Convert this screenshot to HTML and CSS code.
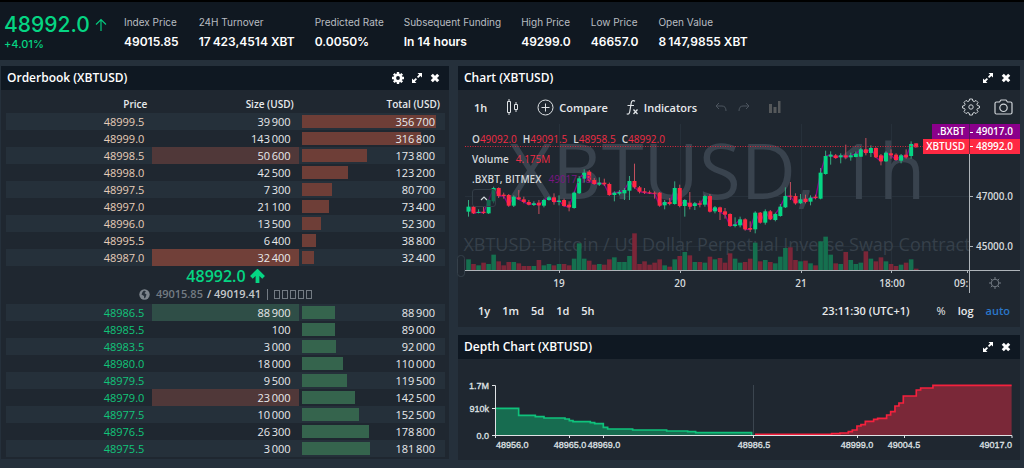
FILE: index.html
```html
<!DOCTYPE html>
<html lang="en">
<head>
<meta charset="utf-8">
<title>XBTUSD</title>
<link rel="stylesheet" href="styles.css">
</head>
<body>
<header class="ticker">
  <div class="last">
    <div class="last-price">48992.0
      <svg width="12" height="14" viewBox="0 0 12 14"><path d="M6 13V1.5M1 6.5 6 1.5l5 5" fill="none" stroke="#05c77c" stroke-width="1.2"/></svg>
    </div>
    <div class="last-change">+4.01%</div>
  </div>
  <dl class="stats">
    <div><dt>Index Price</dt><dd>49015.85</dd></div>
    <div><dt>24H Turnover</dt><dd>17&thinsp;423,4514 XBT</dd></div>
    <div><dt>Predicted Rate</dt><dd>0.0050%</dd></div>
    <div><dt>Subsequent Funding</dt><dd>In 14 hours</dd></div>
    <div><dt>High Price</dt><dd>49299.0</dd></div>
    <div><dt>Low Price</dt><dd>46657.0</dd></div>
    <div><dt>Open Value</dt><dd>8&thinsp;147,9855 XBT</dd></div>
  </dl>
</header>

<svg class="defs" width="0" height="0" aria-hidden="true">
  <symbol id="expand" viewBox="0 0 10 10"><path d="M5.5 0H10v4.500L8.400 2.900 6.200 5 5 3.800 7.100 1.600zM4.500 10H0V5.500l1.600 1.600L3.800 5 5 6.200 2.900 8.400z" fill="#fff"/></symbol>
  <symbol id="close" viewBox="0 0 10 10"><path d="M1.800 1.800 8.200 8.200M8.200 1.800 1.800 8.200" stroke="#fff" stroke-width="3"/></symbol>
</svg>

<main class="board">
  <section class="panel book">
    <div class="panel-head">
      <h2>Orderbook (XBTUSD)</h2>
      <button aria-label="Settings"><svg width="12" height="12" viewBox="0 0 12 12"><circle cx="6" cy="6" r="3.200" fill="none" stroke="#fff" stroke-width="2.600"/><path d="M6 0v2M6 10v2M0 6h2M10 6h2M1.800 1.800l1.400 1.400M8.800 8.800l1.400 1.400M10.200 1.800 8.800 3.200M3.200 8.800l-1.400 1.400" stroke="#fff" stroke-width="2.400"/></svg></button>
      <button aria-label="Expand"><svg width="10" height="10"><use href="#expand"/></svg></button>
      <button aria-label="Close"><svg width="10" height="10"><use href="#close"/></svg></button>
    </div>
    <div class="book-body">
      <table class="levels asks">
        <thead><tr><th>Price</th><th>Size (USD)</th><th>Total (USD)</th></tr></thead>
        <tbody id="asks"></tbody>
      </table>
      <div class="spread">
        <div class="spread-price">48992.0
          <svg width="15" height="14" viewBox="0 0 15 14"><path d="M7.500 14V2.500M1.400 8.400 7.500 2.300 13.600 8.400" fill="none" stroke="#05d583" stroke-width="3.800"/></svg>
        </div>
        <div class="spread-index">
          <svg width="11" height="11" viewBox="0 0 11 11"><circle cx="5.500" cy="5.500" r="5.200" fill="#7d848c"/><path d="M5 1.500 7 2.500 5.500 4 7.500 5.500 6.500 8.500 5.200 9.500 5 7 2.500 5.500 3.500 3z" fill="#29323c"/></svg>
          <span class="dim">49015.85</span><span class="mark">/ 49019.41</span><span class="bar-sep"></span><span class="boxes"><i></i><i></i><i></i><i></i><i></i></span>
        </div>
      </div>
      <table class="levels bids" aria-label="Bids">
        <tbody id="bids"></tbody>
      </table>
    </div>
  </section>

  <div class="side">
    <section class="panel">
      <div class="panel-head">
        <h2>Chart (XBTUSD)</h2>
        <button aria-label="Expand"><svg width="10" height="10"><use href="#expand"/></svg></button>
        <button aria-label="Close"><svg width="10" height="10"><use href="#close"/></svg></button>
      </div>
      <div class="tools">
        <button class="t-interval">1h</button>
        <button class="t-style" aria-label="Candles"><svg width="13" height="18" viewBox="0 0 13 18"><path d="M1.500 3.500h3v11h-3zM3 1v2.500M3 14.500V17M8.500 6.500h3v5h-3zM10 4v2.500M10 11.500V14" fill="none" stroke="#dfe3e6"/></svg></button>
        <button class="t-compare"><svg width="17" height="17" viewBox="0 0 17 17"><circle cx="8.500" cy="8.500" r="7.500" fill="none" stroke="#dfe3e6"/><path d="M8.500 4.500v8M4.500 8.500h8" stroke="#dfe3e6"/></svg>Compare</button>
        <button class="t-indicators"><svg width="13" height="17" viewBox="0 0 13 17"><path d="M9 2.200C7 .800 5.500 2 5.200 4L3.800 12.500C3.500 14.500 2.500 15.500.700 14.800M1.500 6.500H8" fill="none" stroke="#dfe3e6" stroke-width="1.200"/><path d="M7.500 10.500l4 4.500M11.500 10.500l-4 4.500" stroke="#dfe3e6" stroke-width="1.300"/></svg>Indicators</button>
        <button class="t-undo" aria-label="Undo"><svg width="12" height="10" viewBox="0 0 12 10"><path d="M4 1 1 4l3 3M1 4h6q4 0 4 5" fill="none" stroke="#4c555e"/></svg></button>
        <button class="t-redo" aria-label="Redo"><svg width="12" height="10" viewBox="0 0 12 10"><path d="M8 1l3 3-3 3M11 4H5Q1 4 1 9" fill="none" stroke="#4c555e"/></svg></button>
        <button class="t-bars" aria-label="Volume"><svg width="12" height="12" viewBox="0 0 12 12"><path d="M0 3h3v9H0zM4.500 6h3v6h-3zM9 0h2.500v12H9z" fill="#55585a"/></svg></button>
        <span class="fill"></span>
        <button class="t-gear" aria-label="Chart settings"><svg width="18" height="18" viewBox="0 0 18 18"><path d="M7.600 1h2.800l.500 2 1.300.550 1.800-1.100 2 2-1.100 1.750.550 1.300 2 .500v2l-2 .500-.550 1.300 1.100 1.800-2 2-1.800-1.100-1.300.550-.500 2H7.600l-.500-2-1.300-.550L4 15.600l-2-2 1.100-1.800L2.550 10.500l-2-.500V8l2-.500L3.100 6.200 2 4.400l2-2 1.800 1.150L7.100 3z" fill="none" stroke="#cfd4d8" stroke-linejoin="round"/><circle cx="9" cy="9" r="2.200" fill="none" stroke="#cfd4d8"/></svg></button>
        <button class="t-camera" aria-label="Snapshot"><svg width="19" height="16" viewBox="0 0 19 16"><path d="M2.500 3H5.500L7 1h5l1.500 2h3q1.500 0 1.500 1.500v9q0 1.500-1.500 1.500h-14Q1 15 1 13.500v-9Q1 3 2.500 3z" fill="none" stroke="#cfd4d8" stroke-width="1.200"/><circle cx="9.500" cy="8.800" r="3.700" fill="none" stroke="#cfd4d8" stroke-width="1.200"/></svg></button>
      </div>
      <div class="plot">
        <svg class="plot-svg" viewBox="0 0 562 169" role="img" aria-label="Hourly candles">
          <path d="M101.500 0V146M222.500 0V146M343.500 0V146M433.500 0V146M7 72.500H511M7 122.500H511" stroke="#26303a" fill="none"/>
          <text class="wm-big" x="259" y="75" text-anchor="middle">XBTUSD, 1h</text>
          <text class="wm-small" x="259" y="127" text-anchor="middle">XBTUSD: Bitcoin / US Dollar Perpetual Inverse Swap Contract</text>
          <path id="line" fill="none" stroke="#8b008b" stroke-width="1.300"/>
          <g id="candles"></g>
          <path d="M7 22.500H466" stroke="#d8263c" stroke-dasharray="1 1.500"/>
          <path d="M7 146.500H562M511.500 0V169M101.500 146v3M222.500 146v3M343.500 146v3M433.500 146v3M509.500 146v3M511 72.500h4M511 122.500h4" stroke="#aeb4b9" fill="none"/>
          <g class="axis">
            <text x="101" y="163" text-anchor="middle">19</text>
            <text x="222" y="163" text-anchor="middle">20</text>
            <text x="343" y="163" text-anchor="middle">21</text>
            <text x="434" y="163" text-anchor="middle">18:00</text>
            <text x="496" y="163">09:</text>
            <text x="555" y="76" text-anchor="end">47000.0</text>
            <text x="555" y="126" text-anchor="end">45000.0</text>
          </g>
          <path d="M474 0h88v15h-88z" fill="#8b008b"/>
          <path d="M465 15h97v15h-97z" fill="#ff2943"/>
          <path d="M511.500 0V30" stroke="#1f2730" stroke-opacity=".5"/>
          <path d="M512 8.500h3M512 22.500h3" stroke="#fff"/>
          <g class="axis tag">
            <text x="507" y="11" text-anchor="end">.BXBT</text><text x="555" y="11" text-anchor="end">49017.0</text>
            <text x="507" y="26" text-anchor="end">XBTUSD</text><text x="555" y="26" text-anchor="end">48992.0</text>
          </g>
          <g fill="none" stroke="#737b83"><circle cx="537" cy="159" r="3.800"/><path d="M537 153v2M537 163v2M531 159h2M541 159h2M532.800 154.800l1.400 1.400M539.800 161.800l1.400 1.400M541.200 154.800l-1.400 1.400M534.200 161.800l-1.400 1.400"/></g>
          <rect x="-.5" y="131.500" width="7" height="21" rx="3" fill="#1f2730" stroke="#35404a"/>
        </svg>
        <div class="legend">
          <div><b>O</b><span class="red">49092.0</span><b>H</b><span class="red">49091.5</span><b>L</b><span class="red">48958.5</span><b>C</b><span class="red">48992.0</span></div>
          <div><b>Volume</b><span class="red vol">4.175M</span></div>
          <div><b>.BXBT, BITMEX</b><span class="purple">49017.18</span></div>
          <button class="fold" aria-label="Collapse"><svg width="8" height="5" viewBox="0 0 8 5"><path d="M1 4 4 1l3 3" fill="none" stroke="#d5dade" stroke-width="1.200"/></svg></button>
        </div>
      </div>
      <div class="ranges">
        <button>1y</button><button>1m</button><button>5d</button><button>1d</button><button>5h</button>
        <span class="fill"></span>
        <button class="clock">23:11:30 (UTC+1)</button>
        <button class="pct">%</button><button class="log">log</button><button class="auto">auto</button>
      </div>
    </section>

    <section class="panel">
      <div class="panel-head">
        <h2>Depth Chart (XBTUSD)</h2>
        <button aria-label="Expand"><svg width="10" height="10"><use href="#expand"/></svg></button>
        <button aria-label="Close"><svg width="10" height="10"><use href="#close"/></svg></button>
      </div>
      <svg class="depth-svg" viewBox="0 0 562 101" role="img" aria-label="Market depth">
        <path d="M295.500 26V77" stroke="#3b454f"/>
        <g transform="translate(-3 -29) scale(.3333)">
          <path d="M122 235H191V256H241V260H267V264H330V267H343V272H354V275H406V278H419V281H445V292H458V297H533V300H635V303H698V305H722V308H890V317H122z" fill="#176c50"/>
          <path d="M122 235H191V256H241V260H267V264H330V267H343V272H354V275H406V278H419V281H445V292H458V297H533V300H635V303H698V305H722V308H890V317" fill="none" stroke="#0fc27b" stroke-width="5"/>
          <path d="M900 313H1130V311H1155V309H1180V305H1192V300H1206V288H1218V284H1231V274H1256V268H1268V265H1295V255H1307V245H1320V228H1332V219H1345V198H1384V180H1397V174H1434V166H1670V317H900z" fill="#7a2838"/>
          <path d="M900 313H1130V311H1155V309H1180V305H1192V300H1206V288H1218V284H1231V274H1256V268H1268V265H1295V255H1307V245H1320V228H1332V219H1345V198H1384V180H1397V174H1434V166H1670" fill="none" stroke="#f5213d" stroke-width="5"/>
        </g>
        <path d="M34 26.500h3.500V79M34 49.500h3.500M34 76.500H554V79M111.500 76v3M145.500 76v3M295.500 76v3M399.500 76v3M446.500 76v3" fill="none" stroke="#dfe2e5"/>
        <g class="depth-labels">
          <text x="31" y="30" text-anchor="end">1.7M</text><text x="31" y="53" text-anchor="end">910k</text><text x="31" y="80" text-anchor="end">0.0</text>
          <text x="38" y="89">48956.0</text><text x="112" y="89" text-anchor="middle">48965.0</text><text x="146" y="89" text-anchor="middle">48969.0</text><text x="296" y="89" text-anchor="middle">48986.5</text><text x="399" y="89" text-anchor="middle">48999.0</text><text x="446" y="89" text-anchor="middle">49004.5</text><text x="554" y="89" text-anchor="end">49017.0</text>
        </g>
      </svg>
    </section>
  </div>
</main>
<script src="app.js"></script>
</body>
</html>
```
FILE: styles.css
```css
* { box-sizing: border-box; }
body { margin: 0; background: #25303b; color: #e8eaec; font: 11px "Open Sans", "Noto Sans", sans-serif; }
button { background: none; border: 0; padding: 0; margin: 0; color: inherit; font: inherit; display: flex; align-items: center; cursor: pointer; }
svg { display: block; flex: none; }
h2, dl, dd { margin: 0; }
.defs { position: absolute; }
.fill { flex: 1; }

.ticker { display: flex; height: 60px; padding: 10px 4px 0; border-top: 2px solid #000; background: #101821; font-family: Inter, sans-serif; }
.last { width: 120px; color: #05d583; }
.last-price { display: flex; align-items: center; gap: 5px; font-size: 21px; line-height: 26px; font-weight: 500; }
.last-change { font-size: 11px; line-height: 12px; font-weight: 500; }
.stats { display: flex; gap: 20px; white-space: nowrap; }
.stats dt { font-size: 10px; line-height: 20px; color: #b9bdc1; }
.stats dd { font-size: 12px; line-height: 20px; font-weight: 600; color: #fff; }

.board { display: grid; grid-template-columns: 448fr 562fr; gap: 9px; padding: 6px 4px 8px 1px; align-items: start; }
.side { display: grid; gap: 8px; }
.panel { background: #1f2730; min-width: 0; }
.panel-head { display: flex; align-items: center; gap: 8px; height: 24px; padding: 0 9px 0 6px; background: #0f1822; }
.panel-head h2 { flex: 1; font-size: 12px; line-height: 24px; font-weight: 600; color: #fff; }

.book-body { padding: 6px 4px 2px 5px; }
.levels { width: 100%; table-layout: fixed; border-collapse: collapse; text-align: right; line-height: 17px; }
.levels th { padding: 0 5px 0 0; font-size: 10px; font-weight: 600; text-align: right; }
.levels td { height: 17px; padding: 0 8px 0 0; }
.levels tbody tr:nth-child(odd) { background: #25303a; }
.asks .price { color: #e6cdb9; }
.bids .price { color: #12c47a; }
.levels .total { padding: 0 9px 0 3px; }
.stack { display: grid; align-items: center; }
.stack > * { grid-area: 1 / 1; }
.stack i { height: 13px; background: #6e3e37; }
.bids .stack i { background: #35644d; }
.stack span { padding-right: 1px; }
.sell-soft { background: #503839; }
.sell-strong { background: #714039; }
.buy-soft { background: #2f4e47; }
.spread { height: 38px; }
.spread-price { display: flex; justify-content: center; align-items: center; gap: 4px; font-size: 16px; line-height: 20px; font-weight: 600; color: #05d583; }
.spread-index { display: flex; justify-content: center; align-items: center; gap: 6px; line-height: 16px; font-weight: 600; }
.dim { color: #737b83; }
.mark { color: #c5c9cc; margin-left: -2px; }
.bar-sep { width: 1px; height: 11px; background: #737b83; }
.boxes { display: flex; gap: 2px; }
.boxes i { width: 6px; height: 9px; border: 1px solid #737b83; }

.tools { display: flex; align-items: center; height: 34px; padding: 0 7px 0 16px; font-weight: 600; }
.tools button { gap: 5px; }
.t-style { margin-left: 19px; }
.t-compare { margin-left: 18px; }
.t-indicators { margin-left: 18px; }
.t-undo { margin-left: 18px; }
.t-redo { margin-left: 11px; }
.t-bars { margin-left: 19px; }
.t-camera { margin-left: 14px; }
.plot { position: relative; }
.plot-svg, .depth-svg { width: 100%; height: auto; overflow: visible; }
.wm-big { font-size: 76px; fill: #39434e; }
.wm-small { font-size: 18px; fill: #36404a; }
.axis { font-size: 10px; font-weight: 600; fill: #d5d9dc; }
.axis.tag { fill: #fff; }
.legend { position: absolute; left: 14px; top: 5px; font-size: 10px; line-height: 20px; }
.legend b { font-weight: 600; color: #d5d9dc; }
.red { color: #f02c44; margin-right: 6px; }
.vol { margin-left: 7px; }
.purple { color: #7b1583; margin-left: 7px; }
.fold { justify-content: center; width: 24px; height: 18px; border: 1px solid #333d47; border-radius: 3px; background: rgba(31, 39, 48, .6); }
.ranges { display: flex; align-items: center; gap: 12px; height: 34px; padding: 0 10px 0 20px; font-weight: 600; }
.clock { margin-right: 15px; }
.pct { font-weight: 400; }
.auto { color: #2a76c9; }
.depth-labels { font: 9px "Liberation Sans", sans-serif; fill: #dfe2e5; stroke: #dfe2e5; stroke-width: .3; }
```
FILE: app.js
```js
const MAX_TOTAL = 356700;
const asks = [
  ['48999.5', '39 900', '356 700'], ['48999.0', '143 000', '316 800'],
  ['48998.5', '50 600', '173 800', 'sell-soft'], ['48998.0', '42 500', '123 200'],
  ['48997.5', '7 300', '80 700'], ['48997.0', '21 100', '73 400'],
  ['48996.0', '13 500', '52 300'], ['48995.5', '6 400', '38 800'],
  ['48987.0', '32 400', '32 400', 'sell-strong']
];
const bids = [
  ['48986.5', '88 900', '88 900', 'buy-soft'], ['48985.5', '100', '89 000'],
  ['48983.5', '3 000', '92 000'], ['48980.0', '18 000', '110 000'],
  ['48979.5', '9 500', '119 500'], ['48979.0', '23 000', '142 500', 'sell-soft'],
  ['48977.5', '10 000', '152 500'], ['48976.5', '26 300', '178 800'],
  ['48975.5', '3 000', '181 800']
];
const rows = list => list.map(([price, size, total, flag = '']) => {
  const pct = Number(total.replace(' ', '')) / MAX_TOTAL * 100;
  // thin space as thousands separator
  const thin = s => s.replace(' ', '\u2009');
  return `<tr><td class="price">${price}</td><td class="${flag}">${thin(size)}</td>` +
    `<td class="total"><div class="stack"><i style="width:${pct.toFixed(1)}%"></i><span>${thin(total)}</span></div></td></tr>`;
}).join('');
document.getElementById('asks').innerHTML = rows(asks);
document.getElementById('bids').innerHTML = rows(bids);

// [direction, body top, body bottom, wick top, wick bottom, volume], in thirds of a plot unit
const data = [
['g',80,95,60,110,32],['r',80,100,78,102,18],['g',96,99,88,100,14],['r',95,99,80,102,22],['g',60,100,58,102,18],
['g',24,64,20,70,46],['r',24,48,22,54,26],['r',44,48,38,56,14],['r',45,77,42,80,24],['g',50,77,46,81,24],
['r',52,58,30,60,20],['r',58,66,50,70,12],['r',66,74,60,76,12],['g',70,75,64,78,12],['r',68,76,60,102,30],
['g',60,77,56,82,14],['g',52,60,48,62,18],['r',52,66,40,74,14],['g',62,66,46,76,18],['r',60,78,56,80,18],
['r',74,82,64,94,14],['g',38,84,35,86,34],['g',-5,40,-12,42,80],['g',-22,-4,-32,8,34],['r',-25,2,-30,8,28],
['r',0,12,-6,14,16],['g',8,14,-8,18,18],['r',8,13,-4,18,16],['r',12,45,8,47,32],['g',38,45,34,64,38],
['g',36,41,30,46,24],['g',30,40,24,60,24],['g',3,32,-12,60,42],['r',3,22,-49,26,110],['r',22,35,18,40,18],
['r',34,38,24,42,26],['r',37,40,32,42,16],['r',38,41,34,56,22],['r',38,77,36,80,32],['g',66,76,60,88,14],
['r',66,72,54,76,10],['g',24,72,4,74,32],['r',24,78,14,82,42],['g',60,78,58,110,54],['r',68,80,36,88,44],
['g',70,78,66,90,24],['r',70,74,62,82,24],['g',48,74,44,80,22],['r',48,95,42,97,40],['g',82,94,78,100,32],
['r',82,96,80,120,36],['r',94,104,84,116,22],['r',102,138,100,140,50],['g',133,138,112,142,34],['g',118,136,110,142,22],
['r',118,148,115,152,24],['r',144,149,124,156,34],['g',98,148,94,160,82],['r',98,128,96,130,26],['g',94,128,88,134,30],
['r',94,118,90,120,24],['g',102,120,98,124,20],['g',80,108,72,110,40],['g',48,82,22,84,66],['r',47,50,6,60,68],
['r',48,70,40,74,30],['g',58,70,42,72,26],['r',56,66,44,70,28],['g',53,65,46,76,20],['r',50,54,44,58,14],
['g',-22,56,-36,58,86],['g',-72,-18,-88,-16,100],['g',-76,-70,-86,-46,46],['r',-74,-66,-78,-64,20],['g',-74,-68,-80,-50,18],
['r',-74,-68,-106,-64,54],['g',-74,-68,-82,-58,30],['g',-79,-69,-86,-68,18],['g',-92,-70,-96,-69,22],['r',-92,-81,-126,-74,56],
['g',-96,-81,-104,-69,34],['r',-96,-68,-98,-66,26],['r',-74,-56,-78,-44,38],['g',-82,-56,-86,-54,26],['r',-80,-74,-92,-64,18],
['r',-76,-60,-80,-58,12],['g',-74,-58,-78,-50,16],['r',-76,-68,-92,-64,22],['g',-108,-72,-116,-64,32],['r',-110,-98,-110,-98,4]
];
const STEP = 5.03, X0 = 10.5, Y0 = 56, BASE = 146;
const y = v => Y0 + v / 3;
let marks = '', line = '';
data.forEach(([dir, top, bottom, high, low, volume], i) => {
  const x = X0 + i * STEP, up = dir === 'g';
  const color = up ? '#05d583' : '#ff2943';
  marks += `<rect x="${x - 2.3}" y="${BASE - volume / 3}" width="4.6" height="${volume / 3}" fill="${up ? '#15704f' : '#7b2638'}"/>` +
    `<path d="M${x} ${y(high)}V${y(low)}" stroke="${up ? '#38a980' : '#c6505f'}"/>` +
    `<rect x="${x - 2}" y="${y(top)}" width="4" height="${(bottom - top) / 3}" fill="${color}"/>`;
  line += `${i ? 'L' : 'M'}${x} ${y(up ? top : bottom)}`;
});
document.getElementById('candles').innerHTML = marks;
document.getElementById('line').setAttribute('d', line);
```
